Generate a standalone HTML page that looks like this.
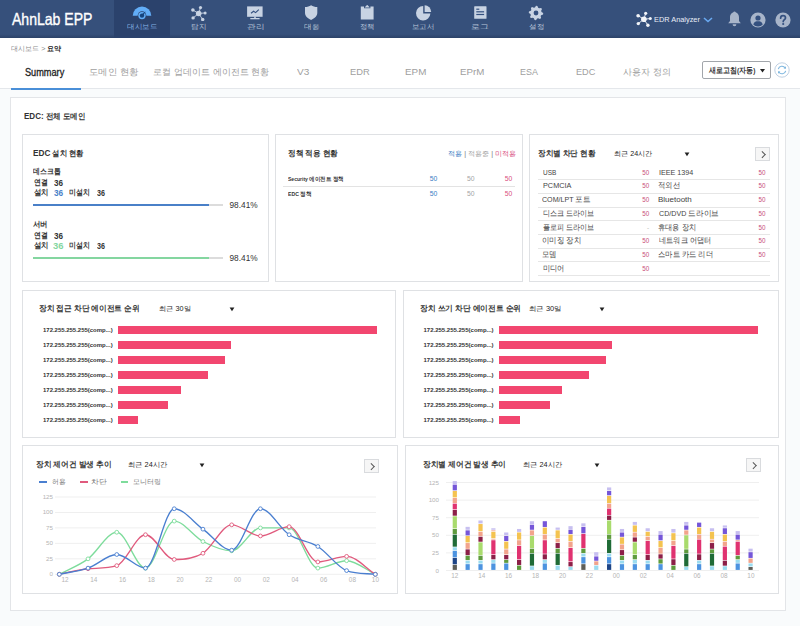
<!DOCTYPE html><html><head><meta charset="utf-8"><style>
*{box-sizing:border-box;margin:0;padding:0}
html,body{width:800px;height:626px;overflow:hidden;background:#f9fbfc;font-family:"Liberation Sans",sans-serif;color:#333}
.a{position:absolute;white-space:nowrap}
.t{position:absolute;white-space:nowrap;line-height:12px;height:12px}
#hdr{position:absolute;left:0;top:0;width:800px;height:38px;background:linear-gradient(#36507b 0,#36507b 90%,#2c4268 100%)}
.nav{position:absolute;top:0;width:56px;height:38px;text-align:center;color:#c3cfe0;font-size:7px}
.nav.on{background:#2b426c;color:#7fb0ea}
.nav svg{position:absolute;left:19px;top:5px}
.nav span{position:absolute;left:0;right:0;top:21.5px;line-height:9px}
#sub{position:absolute;left:0;top:38px;width:800px;height:51px;background:#fff;border-bottom:1px solid #e4e7eb}
#panel{position:absolute;left:10px;top:97px;width:776px;height:514px;background:#fff;border:1px solid #e3e5e8}
.card{position:absolute;background:#fff;border:1px solid #dfe1e4}
.b{font-weight:bold}
.btn{position:absolute;width:15px;height:14px;border:1px solid #d9dbde;background:#f6f6f6}
.btn:after{content:"";position:absolute;left:4px;top:4px;width:3.5px;height:3.5px;border-right:1.2px solid #555;border-top:1.2px solid #555;transform:rotate(45deg)}
</style></head><body>
<div id="hdr">
<div class="t" id="t1" style="left:12.00px;top:12.50px;font-size:16.5px;color:#fff;transform:scaleX(0.8511);transform-origin:0 50%;line-height:20px;height:20px;top:8.5px;-webkit-text-stroke:0.35px #fff;">AhnLab EPP</div>
<div class="nav on" style="left:114.0px"><svg width="20" height="16" viewBox="0 0 20 16" style="left:18px;top:0px;overflow:visible"><path d="M0.7 15.8 A9.3 9.3 0 0 1 19.3 15.8 Z" fill="#62adf7" transform="translate(0,0)"/><circle cx="10" cy="15.6" r="4.3" fill="#2b426c"/><circle cx="10" cy="15.6" r="3.7" fill="#62adf7"/><circle cx="10" cy="15.6" r="2.2" fill="#17457e"/><path d="M8.7 15.2 L13.6 11.2 L11 16.4Z" fill="#17457e"/></svg></div>
<div class="nav" style="left:170.3px"><svg width="18" height="16" viewBox="0 0 18 16"><g stroke="#c8d3e3" stroke-width="0.9"><line x1="9.7" y1="8.5" x2="3.90" y2="5.00"/><line x1="9.7" y1="8.5" x2="11.50" y2="2.60"/><line x1="9.7" y1="8.5" x2="16.10" y2="7.90"/><line x1="9.7" y1="8.5" x2="4.10" y2="12.90"/><line x1="9.7" y1="8.5" x2="13.70" y2="14.50"/></g><circle cx="9.7" cy="8.5" r="2.8" fill="#c8d3e3"/><circle cx="3.90" cy="5.00" r="1.8" fill="#c8d3e3"/><circle cx="11.50" cy="2.60" r="1.6" fill="#c8d3e3"/><circle cx="16.10" cy="7.90" r="1.5" fill="#c8d3e3"/><circle cx="4.10" cy="12.90" r="1.7" fill="#c8d3e3"/><circle cx="13.70" cy="14.50" r="1.7" fill="#c8d3e3"/></svg></div>
<div class="nav" style="left:226.6px"><svg width="18" height="16" viewBox="0 0 18 16"><rect x="1.1" y="1.4" width="15.5" height="10.4" fill="#c8d3e3"/><path d="M5 8.2 L7.6 6.2 L9.6 7.6 L12.8 4.6" stroke="#34507f" stroke-width="1.1" fill="none"/><rect x="8.2" y="11.5" width="1.6" height="1.8" fill="#c8d3e3"/><rect x="4.3" y="13" width="9.3" height="1.3" fill="#c8d3e3"/></svg></div>
<div class="nav" style="left:282.9px"><svg width="18" height="16" viewBox="0 0 18 16"><path d="M9.1 0.3 C10.9 1.4 12.8 2 15.3 2.1 L15.3 7.8 C15.3 11.2 12.8 13.3 9.1 14.9 C5.4 13.3 3 11.2 3 7.8 L3 2.1 C5.4 2 7.3 1.4 9.1 0.3Z" fill="#c8d3e3"/></svg></div>
<div class="nav" style="left:339.2px"><svg width="18" height="16" viewBox="0 0 18 16"><path d="M2.8 1.6 L6 1.6 L6 3.2 L12.4 3.2 L12.4 1.6 L15.6 1.6 L15.6 14.5 L2.8 14.5Z" fill="#c8d3e3"/><path d="M6.6 2.6 L9.2 -0.2 L11.8 2.6Z" fill="#c8d3e3"/></svg></div>
<div class="nav" style="left:395.5px"><svg width="18" height="16" viewBox="0 0 18 16"><path d="M8.2 1 A7.2 7.2 0 1 0 15.4 8.6 L8.2 8.6Z" fill="#c8d3e3"/><path d="M9.6 0.2 A6.8 6.8 0 0 1 16.2 7 L9.6 7Z" fill="#c8d3e3"/></svg></div>
<div class="nav" style="left:451.8px"><svg width="18" height="16" viewBox="0 0 18 16"><rect x="3.2" y="1.25" width="12.3" height="12.6" rx="0.6" fill="#c8d3e3"/><rect x="5.3" y="3.6" width="3" height="1.2" fill="#34507f"/><rect x="5.3" y="6.2" width="7.8" height="1.2" fill="#34507f"/><rect x="5.3" y="8.9" width="7.8" height="1.2" fill="#34507f"/></svg></div>
<div class="nav" style="left:508.1px"><svg width="18" height="16" viewBox="0 0 18 16"><polygon points="9.00,0.80 10.40,0.94 11.14,2.83 12.11,3.34 14.09,2.91 14.99,4.00 14.17,5.86 14.49,6.91 16.20,8.00 16.06,9.40 14.17,10.14 13.66,11.11 14.09,13.09 13.00,13.99 11.14,13.17 10.09,13.49 9.00,15.20 7.60,15.06 6.86,13.17 5.89,12.66 3.91,13.09 3.01,12.00 3.83,10.14 3.51,9.09 1.80,8.00 1.94,6.60 3.83,5.86 4.34,4.89 3.91,2.91 5.00,2.01 6.86,2.83 7.91,2.51" fill="#c8d3e3"/><circle cx="9" cy="8" r="2.4" fill="#34507f"/></svg></div>
<div class="t" id="t2" style="left:127.47px;top:20.80px;font-size:7px;color:#86b3e6;transform:scaleX(1.0747);transform-origin:0 50%;">대시보드</div>
<div class="t" id="t3" style="left:190.91px;top:20.80px;font-size:7px;color:#b9c6da;transform:scaleX(1.0780);transform-origin:0 50%;">탐지</div>
<div class="t" id="t4" style="left:246.77px;top:20.80px;font-size:7px;color:#b9c6da;transform:scaleX(1.2286);transform-origin:0 50%;">관리</div>
<div class="t" id="t5" style="left:304.00px;top:20.80px;font-size:7px;color:#b9c6da;transform:scaleX(1.0889);transform-origin:0 50%;">대응</div>
<div class="t" id="t6" style="left:359.88px;top:20.80px;font-size:7px;color:#b9c6da;transform:scaleX(1.0541);transform-origin:0 50%;">정책</div>
<div class="t" id="t7" style="left:411.88px;top:20.80px;font-size:7px;color:#b9c6da;transform:scaleX(1.0650);transform-origin:0 50%;">보고서</div>
<div class="t" id="t8" style="left:470.67px;top:20.80px;font-size:7px;color:#b9c6da;transform:scaleX(1.2564);transform-origin:0 50%;">로그</div>
<div class="t" id="t9" style="left:529.43px;top:20.80px;font-size:7px;color:#b9c6da;transform:scaleX(1.0741);transform-origin:0 50%;">설정</div>
<svg class="a" style="left:635px;top:11px" width="18" height="17" viewBox="0 0 18 17"><g stroke="#f2f4f8" stroke-width="0.9"><line x1="8.9" y1="8.2" x2="3.10" y2="4.70"/><line x1="8.9" y1="8.2" x2="10.70" y2="2.30"/><line x1="8.9" y1="8.2" x2="15.30" y2="7.60"/><line x1="8.9" y1="8.2" x2="3.30" y2="12.60"/><line x1="8.9" y1="8.2" x2="12.90" y2="14.20"/></g><circle cx="8.9" cy="8.2" r="2.8" fill="#f2f4f8"/><circle cx="3.10" cy="4.70" r="1.8" fill="#f2f4f8"/><circle cx="10.70" cy="2.30" r="1.6" fill="#f2f4f8"/><circle cx="15.30" cy="7.60" r="1.5" fill="#f2f4f8"/><circle cx="3.30" cy="12.60" r="1.7" fill="#f2f4f8"/><circle cx="12.90" cy="14.20" r="1.7" fill="#f2f4f8"/></svg>
<div class="t" id="t10" style="left:654.00px;top:13.50px;font-size:8px;color:#e8eef7;transform:scaleX(0.9220);transform-origin:0 50%;">EDR Analyzer</div>
<svg class="a" style="left:703px;top:16.5px" width="10" height="6" viewBox="0 0 10 6"><path d="M1 1 L5 4.5 L9 1" stroke="#6aaaf2" stroke-width="1.6" fill="none"/></svg>
<svg class="a" style="left:727px;top:11px" width="15" height="16" viewBox="0 0 15 16"><path d="M7.5 1.2 C4.3 1.2 3 3.8 3 6.5 L3 10 L1.2 12.3 L13.8 12.3 L12 10 L12 6.5 C12 3.8 10.7 1.2 7.5 1.2Z" fill="#a8b5ca"/><circle cx="7.5" cy="1.6" r="1.1" fill="#a8b5ca"/><path d="M5.6 13.3 a1.9 1.9 0 0 0 3.8 0Z" fill="#a8b5ca"/></svg>
<svg class="a" style="left:750px;top:11.5px" width="16" height="16" viewBox="0 0 16 16"><circle cx="8" cy="8" r="7.6" fill="#a8b5ca"/><circle cx="8" cy="6" r="2.6" fill="#34507f"/><path d="M3.3 12.5 C4 9.8 6 9.3 8 9.3 C10 9.3 12 9.8 12.7 12.5 C11.5 13.8 10 14.5 8 14.5 C6 14.5 4.5 13.8 3.3 12.5Z" fill="#34507f"/></svg>
<svg class="a" style="left:774.5px;top:11.5px" width="16" height="16" viewBox="0 0 16 16"><circle cx="8" cy="8" r="7.6" fill="#a8b5ca"/><path d="M5.6 6.2 C5.6 4.6 6.7 3.7 8 3.7 C9.4 3.7 10.5 4.6 10.5 5.9 C10.5 7.6 8.2 7.8 8.2 9.6" stroke="#34507f" stroke-width="1.7" fill="none" stroke-linecap="round"/><circle cx="8.2" cy="12" r="1.1" fill="#34507f"/></svg>
</div>
<div id="sub"></div>
<div class="t" id="t11" style="left:11.02px;top:43.00px;font-size:7.2px;color:#8a8a8a;transform:scaleX(1.0045);transform-origin:0 50%;">대시보드 &gt; <b style="color:#222">요약</b></div>
<div class="t" id="t12" style="left:25.47px;top:67.20px;font-size:10px;color:#222;transform:scaleX(0.9169);transform-origin:0 50%;-webkit-text-stroke:0.3px #222;">Summary</div>
<div class="t" id="t13" style="left:88.91px;top:66.40px;font-size:9.3px;color:#a0a0a0;transform:scaleX(1.0444);transform-origin:0 50%;">도메인 현황</div>
<div class="t" id="t14" style="left:153.49px;top:66.40px;font-size:9.3px;color:#a0a0a0;">로컬 업데이트 에이전트 현황</div>
<div class="t" id="t15" style="left:297.46px;top:66.40px;font-size:9.8px;color:#a0a0a0;transform:scaleX(1.0261);transform-origin:0 50%;">V3</div>
<div class="t" id="t16" style="left:350.05px;top:66.40px;font-size:9.8px;color:#a0a0a0;transform:scaleX(0.9528);transform-origin:0 50%;">EDR</div>
<div class="t" id="t17" style="left:404.94px;top:66.40px;font-size:9.8px;color:#a0a0a0;transform:scaleX(1.0046);transform-origin:0 50%;">EPM</div>
<div class="t" id="t18" style="left:460.47px;top:66.40px;font-size:9.8px;color:#a0a0a0;transform:scaleX(0.9934);transform-origin:0 50%;">EPrM</div>
<div class="t" id="t19" style="left:520.09px;top:66.40px;font-size:9.8px;color:#a0a0a0;transform:scaleX(0.9129);transform-origin:0 50%;">ESA</div>
<div class="t" id="t20" style="left:575.54px;top:66.40px;font-size:9.8px;color:#a0a0a0;transform:scaleX(0.9336);transform-origin:0 50%;">EDC</div>
<div class="t" id="t21" style="left:623.47px;top:66.40px;font-size:9.3px;color:#a0a0a0;">사용자 정의</div>
<div class="a" style="left:11px;top:87.5px;width:70px;height:2px;background:#4a8fd8"></div>
<div class="a" style="left:702.4px;top:60.8px;width:68.5px;height:18.4px;border:1px solid #a2a6ab;border-radius:2px;background:#fff"></div>
<div class="t" id="t22" style="left:709.06px;top:65.00px;font-size:7.5px;color:#333;font-weight:bold;transform:scaleX(0.8751);transform-origin:0 50%;">새로고침(자동)</div>
<svg class="a" style="left:760px;top:69px" width="5" height="4" viewBox="0 0 5 4"><path d="M0 0 H5 L2.5 3.5Z" fill="#222"/></svg>
<svg class="a" style="left:774px;top:62px" width="16" height="16" viewBox="0 0 16 16"><circle cx="8" cy="8" r="7.2" fill="#fff" stroke="#bfd0e2" stroke-width="1"/><path d="M4.3 7.2 A3.8 3.8 0 0 1 11.2 6" stroke="#7db6df" stroke-width="1.1" fill="none"/><path d="M11.7 8.8 A3.8 3.8 0 0 1 4.8 10" stroke="#7db6df" stroke-width="1.1" fill="none"/><path d="M12 4.2 L12 6.8 L9.6 6.6Z" fill="#7db6df"/><path d="M4 11.8 L4 9.2 L6.4 9.4Z" fill="#7db6df"/></svg>
<div id="panel"></div>
<div class="t" id="t23" style="left:24.00px;top:109.90px;font-size:7.6px;color:#333;font-weight:bold;transform:scaleX(0.9373);transform-origin:0 50%;"><span style="font-size:8.6px">EDC:</span> 전체 도메인</div>
<div class="card" style="left:22px;top:134px;width:247px;height:148px"></div>
<div class="card" style="left:275px;top:134px;width:248px;height:148px"></div>
<div class="card" style="left:529px;top:134px;width:250px;height:148px"></div>
<div class="card" style="left:22px;top:289.5px;width:374px;height:148px"></div>
<div class="card" style="left:403px;top:289.5px;width:376px;height:148px"></div>
<div class="card" style="left:22px;top:445px;width:376px;height:149px"></div>
<div class="card" style="left:405px;top:445px;width:374px;height:149px"></div>
<div class="t" id="t24" style="left:33.46px;top:147.10px;font-size:7.6px;color:#333;font-weight:bold;transform:scaleX(0.9152);transform-origin:0 50%;"><span style="font-size:9px">EDC</span> 설치 현황</div>
<div class="t" id="t25" style="left:32.98px;top:166.00px;font-size:7.5px;color:#333;font-weight:bold;transform:scaleX(0.8563);transform-origin:0 50%;">데스크톱</div>
<div class="t" id="t26" style="left:33.56px;top:176.50px;font-size:7.5px;color:#333;font-weight:bold;transform:scaleX(0.8608);transform-origin:0 50%;">연결</div>
<div class="t" id="t27" style="left:54.00px;top:176.50px;font-size:8.8px;color:#333;font-weight:bold;transform:scaleX(0.9240);transform-origin:0 50%;">36</div>
<div class="t" id="t28" style="left:33.55px;top:186.50px;font-size:7.5px;color:#333;font-weight:bold;transform:scaleX(0.9270);transform-origin:0 50%;">설치</div>
<div class="t" id="t29" style="left:53.93px;top:186.50px;font-size:8.8px;color:#4a80c8;font-weight:bold;transform:scaleX(0.9355);transform-origin:0 50%;">36</div>
<div class="t" id="t30" style="left:69.00px;top:186.50px;font-size:7.5px;color:#333;font-weight:bold;transform:scaleX(0.8696);transform-origin:0 50%;">미설치</div>
<div class="t" id="t31" style="left:96.52px;top:186.50px;font-size:8.8px;color:#333;font-weight:bold;transform:scaleX(0.8095);transform-origin:0 50%;">36</div>
<div class="a" style="left:33px;top:204.0px;width:190px;height:2.4px;background:#dcdcdc"></div>
<div class="a" style="left:33px;top:204.0px;width:175.5px;height:2.4px;background:#4a80c8"></div>
<div class="t" id="t32" style="left:229.50px;top:199.00px;font-size:8.3px;color:#333;">98.41%</div>
<div class="t" id="t33" style="left:33.00px;top:219.20px;font-size:7.5px;color:#333;font-weight:bold;transform:scaleX(0.9270);transform-origin:0 50%;">서버</div>
<div class="t" id="t34" style="left:33.56px;top:229.70px;font-size:7.5px;color:#333;font-weight:bold;transform:scaleX(0.8608);transform-origin:0 50%;">연결</div>
<div class="t" id="t35" style="left:54.00px;top:229.70px;font-size:8.8px;color:#333;font-weight:bold;transform:scaleX(0.9240);transform-origin:0 50%;">36</div>
<div class="t" id="t36" style="left:33.55px;top:239.70px;font-size:7.5px;color:#333;font-weight:bold;transform:scaleX(0.9270);transform-origin:0 50%;">설치</div>
<div class="t" id="t37" style="left:52.93px;top:239.70px;font-size:8.8px;color:#84d6a0;font-weight:bold;transform:scaleX(1.0692);transform-origin:0 50%;">36</div>
<div class="t" id="t38" style="left:69.00px;top:239.70px;font-size:7.5px;color:#333;font-weight:bold;transform:scaleX(0.8696);transform-origin:0 50%;">미설치</div>
<div class="t" id="t39" style="left:96.52px;top:239.70px;font-size:8.8px;color:#333;font-weight:bold;transform:scaleX(0.8095);transform-origin:0 50%;">36</div>
<div class="a" style="left:33px;top:257.1px;width:190px;height:2.4px;background:#dcdcdc"></div>
<div class="a" style="left:33px;top:257.1px;width:175.5px;height:2.4px;background:#84d6a0"></div>
<div class="t" id="t40" style="left:229.50px;top:252.10px;font-size:8.3px;color:#333;">98.41%</div>
<div class="t" id="t41" style="left:287.51px;top:148.20px;font-size:7.6px;color:#333;font-weight:bold;transform:scaleX(0.9540);transform-origin:0 50%;">정책 적용 현황</div>
<div class="t" id="t42" style="left:447.98px;top:148.20px;font-size:7px;color:#999;transform:scaleX(1.0154);transform-origin:0 50%;"><span style="color:#3b7dc4">적용</span> <span style="color:#777">|</span> <span style="color:#a5a5a5">적용중</span> <span style="color:#777">|</span> <span style="color:#d9507f">미적용</span></div>
<div class="t" id="t43" style="left:288.00px;top:173.30px;font-size:5.5px;color:#333;font-weight:bold;transform:scaleX(0.9183);transform-origin:0 50%;">Security 에이전트 정책</div>
<div class="t" id="t44" style="left:429.80px;top:173.30px;font-size:6.8px;color:#3b7dc4;">50</div>
<div class="t" id="t45" style="left:467.00px;top:173.30px;font-size:6.8px;color:#a5a5a5;">50</div>
<div class="t" id="t46" style="left:504.80px;top:173.30px;font-size:6.8px;color:#d9507f;">50</div>
<div class="t" id="t47" style="left:288.00px;top:187.50px;font-size:5.5px;color:#333;font-weight:bold;transform:scaleX(0.9369);transform-origin:0 50%;">EDC 정책</div>
<div class="t" id="t48" style="left:429.80px;top:187.50px;font-size:6.8px;color:#3b7dc4;">50</div>
<div class="t" id="t49" style="left:467.00px;top:187.50px;font-size:6.8px;color:#a5a5a5;">50</div>
<div class="t" id="t50" style="left:504.80px;top:187.50px;font-size:6.8px;color:#d9507f;">50</div>
<div class="a" style="left:283px;top:185.5px;width:232px;height:1px;background:#e3e3e3"></div>
<div class="t" id="t51" style="left:538.00px;top:148.20px;font-size:7.6px;color:#333;font-weight:bold;transform:scaleX(0.9505);transform-origin:0 50%;">장치별 차단 현황</div>
<div class="t" id="t52" style="left:613.98px;top:148.20px;font-size:7px;color:#222;transform:scaleX(1.0173);transform-origin:0 50%;">최근 24시간</div>
<svg class="a" style="left:683.5px;top:152.2px" width="6" height="5" viewBox="0 0 6 5"><path d="M0.6 0.5 H5.4 L3 4.2Z" fill="#222"/></svg>
<div class="btn" style="left:755px;top:146.5px"></div>
<div class="t" id="t53" style="left:542.64px;top:166.70px;font-size:7.5px;color:#444;transform:scaleX(0.8608);transform-origin:0 50%;">USB</div>
<div class="t" id="t54" style="right:150.79999999999995px;top:166.70px;font-size:6.3px;color:#c9507a;">50</div>
<div class="t" id="t55" style="left:658.53px;top:166.70px;font-size:7.5px;color:#444;transform:scaleX(0.9560);transform-origin:0 50%;">IEEE 1394</div>
<div class="t" id="t56" style="right:34.5px;top:166.70px;font-size:6.3px;color:#c9507a;">50</div>
<div class="a" style="left:538px;top:179.2px;width:232px;height:1px;background:#e6e6e6"></div>
<div class="t" id="t57" style="left:542.50px;top:180.40px;font-size:7.5px;color:#444;transform:scaleX(0.9736);transform-origin:0 50%;">PCMCIA</div>
<div class="t" id="t58" style="right:150.79999999999995px;top:180.40px;font-size:6.3px;color:#c9507a;">50</div>
<div class="t" id="t59" style="left:657.61px;top:180.40px;font-size:7.5px;color:#444;transform:scaleX(0.9204);transform-origin:0 50%;">적외선</div>
<div class="t" id="t60" style="right:34.5px;top:180.40px;font-size:6.3px;color:#c9507a;">50</div>
<div class="a" style="left:538px;top:192.9px;width:232px;height:1px;background:#e6e6e6"></div>
<div class="t" id="t61" style="left:542.46px;top:194.10px;font-size:7.5px;color:#444;transform:scaleX(0.9457);transform-origin:0 50%;">COM/LPT 포트</div>
<div class="t" id="t62" style="right:150.79999999999995px;top:194.10px;font-size:6.3px;color:#c9507a;">50</div>
<div class="t" id="t63" style="left:658.42px;top:194.10px;font-size:7.5px;color:#444;transform:scaleX(1.0662);transform-origin:0 50%;">Bluetooth</div>
<div class="t" id="t64" style="right:34.5px;top:194.10px;font-size:6.3px;color:#c9507a;">50</div>
<div class="a" style="left:538px;top:206.6px;width:232px;height:1px;background:#e6e6e6"></div>
<div class="t" id="t65" style="left:542.57px;top:207.80px;font-size:7.5px;color:#444;transform:scaleX(0.8837);transform-origin:0 50%;">디스크 드라이브</div>
<div class="t" id="t66" style="right:150.79999999999995px;top:207.80px;font-size:6.3px;color:#c9507a;">50</div>
<div class="t" id="t67" style="left:658.52px;top:207.80px;font-size:7.5px;color:#444;transform:scaleX(0.9511);transform-origin:0 50%;">CD/DVD 드라이브</div>
<div class="t" id="t68" style="right:34.5px;top:207.80px;font-size:6.3px;color:#c9507a;">50</div>
<div class="a" style="left:538px;top:220.3px;width:232px;height:1px;background:#e6e6e6"></div>
<div class="t" id="t69" style="left:542.57px;top:221.50px;font-size:7.5px;color:#444;transform:scaleX(0.8837);transform-origin:0 50%;">플로피 드라이브</div>
<div class="t" id="t70" style="right:150.79999999999995px;top:221.50px;font-size:6.3px;color:#bbb;">-</div>
<div class="t" id="t71" style="left:657.66px;top:221.50px;font-size:7.5px;color:#444;transform:scaleX(0.9033);transform-origin:0 50%;">휴대용 장치</div>
<div class="t" id="t72" style="right:34.5px;top:221.50px;font-size:6.3px;color:#c9507a;">50</div>
<div class="a" style="left:538px;top:234.0px;width:232px;height:1px;background:#e6e6e6"></div>
<div class="t" id="t73" style="left:541.58px;top:235.20px;font-size:7.5px;color:#444;transform:scaleX(0.9275);transform-origin:0 50%;">이미징 장치</div>
<div class="t" id="t74" style="right:150.79999999999995px;top:235.20px;font-size:6.3px;color:#c9507a;">50</div>
<div class="t" id="t75" style="left:658.55px;top:235.20px;font-size:7.5px;color:#444;transform:scaleX(0.8987);transform-origin:0 50%;">네트워크 어댑터</div>
<div class="t" id="t76" style="right:34.5px;top:235.20px;font-size:6.3px;color:#c9507a;">50</div>
<div class="a" style="left:538px;top:247.7px;width:232px;height:1px;background:#e6e6e6"></div>
<div class="t" id="t77" style="left:541.60px;top:248.90px;font-size:7.5px;color:#444;transform:scaleX(0.9223);transform-origin:0 50%;">모뎀</div>
<div class="t" id="t78" style="right:150.79999999999995px;top:248.90px;font-size:6.3px;color:#c9507a;">50</div>
<div class="t" id="t79" style="left:657.65px;top:248.90px;font-size:7.5px;color:#444;transform:scaleX(0.9144);transform-origin:0 50%;">스마트 카드 리더</div>
<div class="t" id="t80" style="right:34.5px;top:248.90px;font-size:6.3px;color:#c9507a;">50</div>
<div class="a" style="left:538px;top:261.4px;width:232px;height:1px;background:#e6e6e6"></div>
<div class="t" id="t81" style="left:542.59px;top:262.60px;font-size:7.5px;color:#444;transform:scaleX(0.9034);transform-origin:0 50%;">미디어</div>
<div class="t" id="t82" style="right:150.79999999999995px;top:262.60px;font-size:6.3px;color:#c9507a;">50</div>
<div class="a" style="left:538px;top:275.1px;width:232px;height:1px;background:#e6e6e6"></div>
<div class="t" id="t83" style="left:38.98px;top:303.00px;font-size:7.6px;color:#333;font-weight:bold;transform:scaleX(0.9636);transform-origin:0 50%;">장치 접근 차단 에이전트 순위</div>
<div class="t" id="t84" style="left:158.50px;top:303.00px;font-size:7px;color:#222;transform:scaleX(1.0338);transform-origin:0 50%;">최근 30일</div>
<svg class="a" style="left:229px;top:307.2px" width="6" height="5" viewBox="0 0 6 5"><path d="M0.6 0.5 H5.4 L3 4.2Z" fill="#222"/></svg>
<div class="t" id="t85" style="left:42.50px;top:324.30px;font-size:6px;color:#333;font-weight:bold;transform:scaleX(0.9946);transform-origin:0 50%;">172.255.255.255(comp...)</div>
<div class="a" style="left:118px;top:326.3px;width:258.5px;height:8.2px;background:#f2466f"></div>
<div class="t" id="t86" style="left:42.50px;top:339.30px;font-size:6px;color:#333;font-weight:bold;transform:scaleX(0.9946);transform-origin:0 50%;">172.255.255.255(comp...)</div>
<div class="a" style="left:118px;top:341.3px;width:112.5px;height:8.2px;background:#f2466f"></div>
<div class="t" id="t87" style="left:42.50px;top:354.30px;font-size:6px;color:#333;font-weight:bold;transform:scaleX(0.9946);transform-origin:0 50%;">172.255.255.255(comp...)</div>
<div class="a" style="left:118px;top:356.3px;width:106.5px;height:8.2px;background:#f2466f"></div>
<div class="t" id="t88" style="left:42.50px;top:369.30px;font-size:6px;color:#333;font-weight:bold;transform:scaleX(0.9946);transform-origin:0 50%;">172.255.255.255(comp...)</div>
<div class="a" style="left:118px;top:371.3px;width:89.5px;height:8.2px;background:#f2466f"></div>
<div class="t" id="t89" style="left:42.50px;top:384.30px;font-size:6px;color:#333;font-weight:bold;transform:scaleX(0.9946);transform-origin:0 50%;">172.255.255.255(comp...)</div>
<div class="a" style="left:118px;top:386.3px;width:62.5px;height:8.2px;background:#f2466f"></div>
<div class="t" id="t90" style="left:42.50px;top:399.30px;font-size:6px;color:#333;font-weight:bold;transform:scaleX(0.9946);transform-origin:0 50%;">172.255.255.255(comp...)</div>
<div class="a" style="left:118px;top:401.3px;width:50.0px;height:8.2px;background:#f2466f"></div>
<div class="t" id="t91" style="left:42.50px;top:414.30px;font-size:6px;color:#333;font-weight:bold;transform:scaleX(0.9946);transform-origin:0 50%;">172.255.255.255(comp...)</div>
<div class="a" style="left:118px;top:416.3px;width:20.0px;height:8.2px;background:#f2466f"></div>
<div class="t" id="t92" style="left:420.00px;top:303.00px;font-size:7.6px;color:#333;font-weight:bold;transform:scaleX(0.9691);transform-origin:0 50%;">장치 쓰기 차단 에이전트 순위</div>
<div class="t" id="t93" style="left:528.95px;top:303.00px;font-size:7px;color:#222;transform:scaleX(1.0624);transform-origin:0 50%;">최근 30일</div>
<svg class="a" style="left:599px;top:307.2px" width="6" height="5" viewBox="0 0 6 5"><path d="M0.6 0.5 H5.4 L3 4.2Z" fill="#222"/></svg>
<div class="t" id="t94" style="left:423.50px;top:324.30px;font-size:6px;color:#333;font-weight:bold;">172.255.255.255(comp...)</div>
<div class="a" style="left:499px;top:326.3px;width:259.0px;height:8.2px;background:#f2466f"></div>
<div class="t" id="t95" style="left:423.50px;top:339.30px;font-size:6px;color:#333;font-weight:bold;">172.255.255.255(comp...)</div>
<div class="a" style="left:499px;top:341.3px;width:113.0px;height:8.2px;background:#f2466f"></div>
<div class="t" id="t96" style="left:423.50px;top:354.30px;font-size:6px;color:#333;font-weight:bold;">172.255.255.255(comp...)</div>
<div class="a" style="left:499px;top:356.3px;width:106.5px;height:8.2px;background:#f2466f"></div>
<div class="t" id="t97" style="left:423.50px;top:369.30px;font-size:6px;color:#333;font-weight:bold;">172.255.255.255(comp...)</div>
<div class="a" style="left:499px;top:371.3px;width:90.0px;height:8.2px;background:#f2466f"></div>
<div class="t" id="t98" style="left:423.50px;top:384.30px;font-size:6px;color:#333;font-weight:bold;">172.255.255.255(comp...)</div>
<div class="a" style="left:499px;top:386.3px;width:63.0px;height:8.2px;background:#f2466f"></div>
<div class="t" id="t99" style="left:423.50px;top:399.30px;font-size:6px;color:#333;font-weight:bold;">172.255.255.255(comp...)</div>
<div class="a" style="left:499px;top:401.3px;width:50.5px;height:8.2px;background:#f2466f"></div>
<div class="t" id="t100" style="left:423.50px;top:414.30px;font-size:6px;color:#333;font-weight:bold;">172.255.255.255(comp...)</div>
<div class="a" style="left:499px;top:416.3px;width:20.5px;height:8.2px;background:#f2466f"></div>
<div class="t" id="t101" style="left:36.01px;top:459.00px;font-size:7.6px;color:#333;font-weight:bold;transform:scaleX(0.9612);transform-origin:0 50%;">장치 제어건 발생 추이</div>
<div class="t" id="t102" style="left:128.42px;top:459.00px;font-size:7px;color:#222;transform:scaleX(1.0397);transform-origin:0 50%;">최근 24시간</div>
<svg class="a" style="left:198.5px;top:463.2px" width="6" height="5" viewBox="0 0 6 5"><path d="M0.6 0.5 H5.4 L3 4.2Z" fill="#222"/></svg>
<div class="btn" style="left:364px;top:459px"></div>
<div class="t" id="t103" style="left:422.50px;top:459.00px;font-size:7.6px;color:#333;font-weight:bold;transform:scaleX(0.9626);transform-origin:0 50%;">장치별 제어건 발생 추이</div>
<div class="t" id="t104" style="left:523.45px;top:459.00px;font-size:7px;color:#222;transform:scaleX(1.0341);transform-origin:0 50%;">최근 24시간</div>
<svg class="a" style="left:593.5px;top:463.2px" width="6" height="5" viewBox="0 0 6 5"><path d="M0.6 0.5 H5.4 L3 4.2Z" fill="#222"/></svg>
<div class="btn" style="left:745.5px;top:458px"></div>
<div class="a" style="left:39.2px;top:481.3px;width:7.8px;height:1.6px;background:#4a7fd0"></div>
<div class="t" id="t105" style="left:51.57px;top:476.00px;font-size:6.8px;color:#777;transform:scaleX(0.9749);transform-origin:0 50%;">허용</div>
<div class="a" style="left:79.9px;top:481.3px;width:7.8px;height:1.6px;background:#e05a7d"></div>
<div class="t" id="t106" style="left:91.34px;top:476.00px;font-size:6.8px;color:#777;transform:scaleX(1.1196);transform-origin:0 50%;">차단</div>
<div class="a" style="left:120.5px;top:481.3px;width:7.8px;height:1.6px;background:#7edc9c"></div>
<div class="t" id="t107" style="left:132.50px;top:476.00px;font-size:6.8px;color:#777;transform:scaleX(0.9941);transform-origin:0 50%;">모니터링</div>
<svg class="a" style="left:0;top:0" width="800" height="626" viewBox="0 0 800 626"><line x1="55" y1="574.30" x2="376" y2="574.30" stroke="#efefef" stroke-width="1"/><line x1="55" y1="558.84" x2="376" y2="558.84" stroke="#efefef" stroke-width="1"/><line x1="55" y1="543.38" x2="376" y2="543.38" stroke="#efefef" stroke-width="1"/><line x1="55" y1="527.92" x2="376" y2="527.92" stroke="#efefef" stroke-width="1"/><line x1="55" y1="512.46" x2="376" y2="512.46" stroke="#efefef" stroke-width="1"/><line x1="55" y1="497.00" x2="376" y2="497.00" stroke="#efefef" stroke-width="1"/><path d="M59.30 574.30 C68.88 569.15 78.45 565.85 88.03 558.84 C97.61 551.83 107.18 532.25 116.76 532.25 C126.34 532.25 135.91 568.12 145.49 568.12 C155.07 568.12 164.64 521.12 174.22 521.12 C183.80 521.12 193.37 536.58 202.95 541.52 C212.53 546.47 222.10 550.80 231.68 550.80 C241.26 550.80 250.83 527.92 260.41 527.92 C269.99 527.92 279.56 527.92 289.14 527.92 C298.72 527.92 308.29 568.12 317.87 568.12 C327.45 568.12 337.02 560.70 346.60 560.70 C356.18 560.70 365.75 569.77 375.33 574.30" stroke="#7edc9c" stroke-width="1.35" fill="none"/><circle cx="59.30" cy="574.30" r="1.9" fill="#fff" stroke="#7edc9c" stroke-width="0.9"/><circle cx="88.03" cy="558.84" r="1.9" fill="#fff" stroke="#7edc9c" stroke-width="0.9"/><circle cx="116.76" cy="532.25" r="1.9" fill="#fff" stroke="#7edc9c" stroke-width="0.9"/><circle cx="145.49" cy="568.12" r="1.9" fill="#fff" stroke="#7edc9c" stroke-width="0.9"/><circle cx="174.22" cy="521.12" r="1.9" fill="#fff" stroke="#7edc9c" stroke-width="0.9"/><circle cx="202.95" cy="541.52" r="1.9" fill="#fff" stroke="#7edc9c" stroke-width="0.9"/><circle cx="231.68" cy="550.80" r="1.9" fill="#fff" stroke="#7edc9c" stroke-width="0.9"/><circle cx="260.41" cy="527.92" r="1.9" fill="#fff" stroke="#7edc9c" stroke-width="0.9"/><circle cx="289.14" cy="527.92" r="1.9" fill="#fff" stroke="#7edc9c" stroke-width="0.9"/><circle cx="317.87" cy="568.12" r="1.9" fill="#fff" stroke="#7edc9c" stroke-width="0.9"/><circle cx="346.60" cy="560.70" r="1.9" fill="#fff" stroke="#7edc9c" stroke-width="0.9"/><circle cx="375.33" cy="574.30" r="1.9" fill="#fff" stroke="#7edc9c" stroke-width="0.9"/><path d="M59.30 574.30 C68.88 572.44 78.45 569.50 88.03 568.73 C97.61 567.97 107.18 568.64 116.76 565.64 C126.34 562.65 135.91 534.72 145.49 534.72 C155.07 534.72 164.64 559.46 174.22 559.46 C183.80 559.46 193.37 559.05 202.95 553.27 C212.53 547.50 222.10 524.83 231.68 524.83 C241.26 524.83 250.83 535.96 260.41 535.96 C269.99 535.96 279.56 526.68 289.14 526.68 C298.72 526.68 308.29 561.93 317.87 561.93 C327.45 561.93 337.02 556.37 346.60 556.37 C356.18 556.37 365.75 568.32 375.33 574.30" stroke="#e05a7d" stroke-width="1.35" fill="none"/><circle cx="59.30" cy="574.30" r="1.9" fill="#fff" stroke="#e05a7d" stroke-width="0.9"/><circle cx="88.03" cy="568.73" r="1.9" fill="#fff" stroke="#e05a7d" stroke-width="0.9"/><circle cx="116.76" cy="565.64" r="1.9" fill="#fff" stroke="#e05a7d" stroke-width="0.9"/><circle cx="145.49" cy="534.72" r="1.9" fill="#fff" stroke="#e05a7d" stroke-width="0.9"/><circle cx="174.22" cy="559.46" r="1.9" fill="#fff" stroke="#e05a7d" stroke-width="0.9"/><circle cx="202.95" cy="553.27" r="1.9" fill="#fff" stroke="#e05a7d" stroke-width="0.9"/><circle cx="231.68" cy="524.83" r="1.9" fill="#fff" stroke="#e05a7d" stroke-width="0.9"/><circle cx="260.41" cy="535.96" r="1.9" fill="#fff" stroke="#e05a7d" stroke-width="0.9"/><circle cx="289.14" cy="526.68" r="1.9" fill="#fff" stroke="#e05a7d" stroke-width="0.9"/><circle cx="317.87" cy="561.93" r="1.9" fill="#fff" stroke="#e05a7d" stroke-width="0.9"/><circle cx="346.60" cy="556.37" r="1.9" fill="#fff" stroke="#e05a7d" stroke-width="0.9"/><circle cx="375.33" cy="574.30" r="1.9" fill="#fff" stroke="#e05a7d" stroke-width="0.9"/><path d="M59.30 574.30 C68.88 572.24 78.45 571.41 88.03 568.12 C97.61 564.82 107.18 554.51 116.76 554.51 C126.34 554.51 135.91 568.12 145.49 568.12 C155.07 568.12 164.64 508.75 174.22 508.75 C183.80 508.75 193.37 522.25 202.95 529.16 C212.53 536.06 222.10 550.18 231.68 550.18 C241.26 550.18 250.83 508.75 260.41 508.75 C269.99 508.75 279.56 528.44 289.14 534.72 C298.72 541.01 308.29 540.49 317.87 546.47 C327.45 552.45 337.02 567.00 346.60 570.59 C356.18 574.17 365.75 573.34 375.33 574.30" stroke="#4a7fd0" stroke-width="1.35" fill="none"/><circle cx="59.30" cy="574.30" r="1.9" fill="#fff" stroke="#4a7fd0" stroke-width="0.9"/><circle cx="88.03" cy="568.12" r="1.9" fill="#fff" stroke="#4a7fd0" stroke-width="0.9"/><circle cx="116.76" cy="554.51" r="1.9" fill="#fff" stroke="#4a7fd0" stroke-width="0.9"/><circle cx="145.49" cy="568.12" r="1.9" fill="#fff" stroke="#4a7fd0" stroke-width="0.9"/><circle cx="174.22" cy="508.75" r="1.9" fill="#fff" stroke="#4a7fd0" stroke-width="0.9"/><circle cx="202.95" cy="529.16" r="1.9" fill="#fff" stroke="#4a7fd0" stroke-width="0.9"/><circle cx="231.68" cy="550.18" r="1.9" fill="#fff" stroke="#4a7fd0" stroke-width="0.9"/><circle cx="260.41" cy="508.75" r="1.9" fill="#fff" stroke="#4a7fd0" stroke-width="0.9"/><circle cx="289.14" cy="534.72" r="1.9" fill="#fff" stroke="#4a7fd0" stroke-width="0.9"/><circle cx="317.87" cy="546.47" r="1.9" fill="#fff" stroke="#4a7fd0" stroke-width="0.9"/><circle cx="346.60" cy="570.59" r="1.9" fill="#fff" stroke="#4a7fd0" stroke-width="0.9"/><circle cx="375.33" cy="574.30" r="1.9" fill="#fff" stroke="#4a7fd0" stroke-width="0.9"/></svg>
<div class="t" id="t108" style="right:747px;top:568.30px;font-size:6.2px;color:#b5b5b5;">0</div>
<div class="t" id="t109" style="right:747px;top:552.84px;font-size:6.2px;color:#b5b5b5;">25</div>
<div class="t" id="t110" style="right:747px;top:537.38px;font-size:6.2px;color:#b5b5b5;">50</div>
<div class="t" id="t111" style="right:747px;top:521.92px;font-size:6.2px;color:#b5b5b5;">75</div>
<div class="t" id="t112" style="right:747px;top:506.46px;font-size:6.2px;color:#b5b5b5;">100</div>
<div class="t" id="t113" style="right:747px;top:491.00px;font-size:6.2px;color:#b5b5b5;">125</div>
<div class="t" style="left:55.10px;width:20px;text-align:center;top:573.60px;font-size:6.4px;color:#b5b5b5">12</div>
<div class="t" style="left:83.83px;width:20px;text-align:center;top:573.60px;font-size:6.4px;color:#b5b5b5">14</div>
<div class="t" style="left:112.56px;width:20px;text-align:center;top:573.60px;font-size:6.4px;color:#b5b5b5">16</div>
<div class="t" style="left:141.29px;width:20px;text-align:center;top:573.60px;font-size:6.4px;color:#b5b5b5">18</div>
<div class="t" style="left:170.02px;width:20px;text-align:center;top:573.60px;font-size:6.4px;color:#b5b5b5">20</div>
<div class="t" style="left:198.75px;width:20px;text-align:center;top:573.60px;font-size:6.4px;color:#b5b5b5">22</div>
<div class="t" style="left:227.48px;width:20px;text-align:center;top:573.60px;font-size:6.4px;color:#b5b5b5">00</div>
<div class="t" style="left:256.21px;width:20px;text-align:center;top:573.60px;font-size:6.4px;color:#b5b5b5">02</div>
<div class="t" style="left:284.94px;width:20px;text-align:center;top:573.60px;font-size:6.4px;color:#b5b5b5">04</div>
<div class="t" style="left:313.67px;width:20px;text-align:center;top:573.60px;font-size:6.4px;color:#b5b5b5">06</div>
<div class="t" style="left:342.40px;width:20px;text-align:center;top:573.60px;font-size:6.4px;color:#b5b5b5">08</div>
<div class="t" style="left:365.40px;width:20px;text-align:center;top:573.60px;font-size:6.4px;color:#b5b5b5">10</div>
<svg class="a" style="left:0;top:0" width="800" height="626" viewBox="0 0 800 626"><line x1="446" y1="570.50" x2="759" y2="570.50" stroke="#efefef" stroke-width="1"/><line x1="446" y1="552.90" x2="759" y2="552.90" stroke="#efefef" stroke-width="1"/><line x1="446" y1="535.30" x2="759" y2="535.30" stroke="#efefef" stroke-width="1"/><line x1="446" y1="517.70" x2="759" y2="517.70" stroke="#efefef" stroke-width="1"/><line x1="446" y1="500.10" x2="759" y2="500.10" stroke="#efefef" stroke-width="1"/><line x1="446" y1="482.50" x2="759" y2="482.50" stroke="#efefef" stroke-width="1"/><rect x="452.70" y="564.87" width="4.2" height="5.03" fill="#5e5e58"/><rect x="452.70" y="557.83" width="4.2" height="6.44" fill="#1d4486"/><rect x="452.70" y="550.79" width="4.2" height="6.44" fill="#4c93e0"/><rect x="452.70" y="547.27" width="4.2" height="2.92" fill="#9bdcf0"/><rect x="452.70" y="534.60" width="4.2" height="12.07" fill="#1f6b36"/><rect x="452.70" y="528.96" width="4.2" height="5.03" fill="#5f9b3e"/><rect x="452.70" y="516.29" width="4.2" height="12.07" fill="#a9db6d"/><rect x="452.70" y="509.96" width="4.2" height="5.74" fill="#8c1f47"/><rect x="452.70" y="503.62" width="4.2" height="5.74" fill="#e03270"/><rect x="452.70" y="497.99" width="4.2" height="5.03" fill="#f2a48c"/><rect x="452.70" y="490.95" width="4.2" height="6.44" fill="#f4c350"/><rect x="452.70" y="484.61" width="4.2" height="5.74" fill="#7556d8"/><rect x="452.70" y="481.09" width="4.2" height="2.92" fill="#c7bff0"/><rect x="465.56" y="564.16" width="4.2" height="5.74" fill="#4c93e0"/><rect x="465.56" y="560.64" width="4.2" height="2.92" fill="#9bdcf0"/><rect x="465.56" y="555.72" width="4.2" height="4.33" fill="#5f9b3e"/><rect x="465.56" y="549.38" width="4.2" height="5.74" fill="#8c1f47"/><rect x="465.56" y="543.04" width="4.2" height="5.74" fill="#f2a48c"/><rect x="465.56" y="536.00" width="4.2" height="6.44" fill="#f4c350"/><rect x="465.56" y="530.37" width="4.2" height="5.03" fill="#7556d8"/><rect x="465.56" y="526.85" width="4.2" height="2.92" fill="#c7bff0"/><rect x="478.42" y="564.16" width="4.2" height="5.74" fill="#4c93e0"/><rect x="478.42" y="560.64" width="4.2" height="2.92" fill="#9bdcf0"/><rect x="478.42" y="555.72" width="4.2" height="4.33" fill="#5f9b3e"/><rect x="478.42" y="542.34" width="4.2" height="12.78" fill="#a9db6d"/><rect x="478.42" y="536.71" width="4.2" height="5.03" fill="#8c1f47"/><rect x="478.42" y="531.78" width="4.2" height="4.33" fill="#f2a48c"/><rect x="478.42" y="524.04" width="4.2" height="7.14" fill="#f4c350"/><rect x="478.42" y="520.52" width="4.2" height="2.92" fill="#c7bff0"/><rect x="491.28" y="563.46" width="4.2" height="6.44" fill="#4c93e0"/><rect x="491.28" y="559.94" width="4.2" height="2.92" fill="#9bdcf0"/><rect x="491.28" y="555.01" width="4.2" height="4.33" fill="#8c1f47"/><rect x="491.28" y="540.23" width="4.2" height="14.18" fill="#e03270"/><rect x="491.28" y="538.82" width="4.2" height="0.81" fill="#f2a48c"/><rect x="491.28" y="531.78" width="4.2" height="6.44" fill="#f4c350"/><rect x="491.28" y="530.37" width="4.2" height="0.81" fill="#f2a48c"/><rect x="491.28" y="528.26" width="4.2" height="1.51" fill="#c7bff0"/><rect x="504.14" y="563.46" width="4.2" height="6.44" fill="#4c93e0"/><rect x="504.14" y="559.94" width="4.2" height="2.92" fill="#5f9b3e"/><rect x="504.14" y="555.01" width="4.2" height="4.33" fill="#8c1f47"/><rect x="504.14" y="549.38" width="4.2" height="5.03" fill="#f2a48c"/><rect x="504.14" y="541.64" width="4.2" height="7.14" fill="#f4c350"/><rect x="504.14" y="536.00" width="4.2" height="5.03" fill="#7556d8"/><rect x="504.14" y="532.48" width="4.2" height="2.92" fill="#c7bff0"/><rect x="517.00" y="565.57" width="4.2" height="4.33" fill="#5f9b3e"/><rect x="517.00" y="559.94" width="4.2" height="5.03" fill="#8c1f47"/><rect x="517.00" y="545.86" width="4.2" height="13.48" fill="#e03270"/><rect x="517.00" y="540.23" width="4.2" height="5.03" fill="#f2a48c"/><rect x="517.00" y="532.48" width="4.2" height="7.14" fill="#f4c350"/><rect x="517.00" y="528.96" width="4.2" height="2.92" fill="#c7bff0"/><rect x="529.86" y="566.28" width="4.2" height="3.62" fill="#9bdcf0"/><rect x="529.86" y="553.60" width="4.2" height="12.07" fill="#1f6b36"/><rect x="529.86" y="548.68" width="4.2" height="4.33" fill="#5f9b3e"/><rect x="529.86" y="536.00" width="4.2" height="12.07" fill="#a9db6d"/><rect x="529.86" y="530.37" width="4.2" height="5.03" fill="#f2a48c"/><rect x="529.86" y="524.74" width="4.2" height="5.03" fill="#7556d8"/><rect x="529.86" y="521.22" width="4.2" height="2.92" fill="#c7bff0"/><rect x="542.72" y="563.46" width="4.2" height="6.44" fill="#4c93e0"/><rect x="542.72" y="559.94" width="4.2" height="2.92" fill="#9bdcf0"/><rect x="542.72" y="554.31" width="4.2" height="5.03" fill="#8c1f47"/><rect x="542.72" y="540.23" width="4.2" height="13.48" fill="#e03270"/><rect x="542.72" y="534.60" width="4.2" height="5.03" fill="#f2a48c"/><rect x="542.72" y="527.56" width="4.2" height="6.44" fill="#f4c350"/><rect x="542.72" y="521.22" width="4.2" height="5.74" fill="#7556d8"/><rect x="555.58" y="565.57" width="4.2" height="4.33" fill="#9bdcf0"/><rect x="555.58" y="553.60" width="4.2" height="11.37" fill="#1f6b36"/><rect x="555.58" y="548.68" width="4.2" height="4.33" fill="#5f9b3e"/><rect x="555.58" y="543.04" width="4.2" height="5.03" fill="#8c1f47"/><rect x="555.58" y="538.82" width="4.2" height="3.62" fill="#f2a48c"/><rect x="555.58" y="530.37" width="4.2" height="7.85" fill="#f4c350"/><rect x="555.58" y="527.56" width="4.2" height="2.22" fill="#c7bff0"/><rect x="568.44" y="566.98" width="4.2" height="2.92" fill="#9bdcf0"/><rect x="568.44" y="562.05" width="4.2" height="4.33" fill="#8c1f47"/><rect x="568.44" y="547.97" width="4.2" height="13.48" fill="#e03270"/><rect x="568.44" y="541.64" width="4.2" height="5.74" fill="#f2a48c"/><rect x="568.44" y="534.60" width="4.2" height="6.44" fill="#f4c350"/><rect x="568.44" y="529.67" width="4.2" height="4.33" fill="#7556d8"/><rect x="568.44" y="526.15" width="4.2" height="2.92" fill="#c7bff0"/><rect x="581.30" y="564.16" width="4.2" height="5.74" fill="#5e5e58"/><rect x="581.30" y="557.12" width="4.2" height="6.44" fill="#4c93e0"/><rect x="581.30" y="553.60" width="4.2" height="2.92" fill="#9bdcf0"/><rect x="581.30" y="548.68" width="4.2" height="4.33" fill="#5f9b3e"/><rect x="581.30" y="533.89" width="4.2" height="14.18" fill="#e03270"/><rect x="581.30" y="526.85" width="4.2" height="6.44" fill="#7556d8"/><rect x="581.30" y="523.33" width="4.2" height="2.92" fill="#c7bff0"/><rect x="594.16" y="565.57" width="4.2" height="4.33" fill="#9bdcf0"/><rect x="594.16" y="561.35" width="4.2" height="3.62" fill="#f2a48c"/><rect x="594.16" y="556.42" width="4.2" height="4.33" fill="#7556d8"/><rect x="594.16" y="552.20" width="4.2" height="3.62" fill="#c7bff0"/><rect x="607.02" y="564.16" width="4.2" height="5.74" fill="#1d4486"/><rect x="607.02" y="557.12" width="4.2" height="6.44" fill="#4c93e0"/><rect x="607.02" y="553.60" width="4.2" height="2.92" fill="#9bdcf0"/><rect x="607.02" y="539.52" width="4.2" height="13.48" fill="#1f6b36"/><rect x="607.02" y="534.60" width="4.2" height="4.33" fill="#5f9b3e"/><rect x="607.02" y="520.52" width="4.2" height="13.48" fill="#a9db6d"/><rect x="607.02" y="515.59" width="4.2" height="4.33" fill="#8c1f47"/><rect x="607.02" y="508.55" width="4.2" height="6.44" fill="#e03270"/><rect x="607.02" y="503.62" width="4.2" height="4.33" fill="#f2a48c"/><rect x="607.02" y="495.88" width="4.2" height="7.14" fill="#f4c350"/><rect x="607.02" y="490.95" width="4.2" height="4.33" fill="#7556d8"/><rect x="607.02" y="487.43" width="4.2" height="2.92" fill="#c7bff0"/><rect x="619.88" y="564.16" width="4.2" height="5.74" fill="#4c93e0"/><rect x="619.88" y="560.64" width="4.2" height="2.92" fill="#9bdcf0"/><rect x="619.88" y="555.72" width="4.2" height="4.33" fill="#5f9b3e"/><rect x="619.88" y="550.08" width="4.2" height="5.03" fill="#8c1f47"/><rect x="619.88" y="544.45" width="4.2" height="5.03" fill="#f2a48c"/><rect x="619.88" y="537.41" width="4.2" height="6.44" fill="#f4c350"/><rect x="619.88" y="532.48" width="4.2" height="4.33" fill="#7556d8"/><rect x="619.88" y="528.96" width="4.2" height="2.92" fill="#c7bff0"/><rect x="632.74" y="564.16" width="4.2" height="5.74" fill="#4c93e0"/><rect x="632.74" y="559.94" width="4.2" height="3.62" fill="#9bdcf0"/><rect x="632.74" y="555.01" width="4.2" height="4.33" fill="#5f9b3e"/><rect x="632.74" y="542.34" width="4.2" height="12.07" fill="#a9db6d"/><rect x="632.74" y="537.41" width="4.2" height="4.33" fill="#8c1f47"/><rect x="632.74" y="532.48" width="4.2" height="4.33" fill="#f2a48c"/><rect x="632.74" y="525.44" width="4.2" height="6.44" fill="#f4c350"/><rect x="632.74" y="521.92" width="4.2" height="2.92" fill="#c7bff0"/><rect x="645.60" y="564.16" width="4.2" height="5.74" fill="#4c93e0"/><rect x="645.60" y="560.64" width="4.2" height="2.92" fill="#9bdcf0"/><rect x="645.60" y="555.01" width="4.2" height="5.03" fill="#8c1f47"/><rect x="645.60" y="540.93" width="4.2" height="13.48" fill="#e03270"/><rect x="645.60" y="536.71" width="4.2" height="3.62" fill="#f2a48c"/><rect x="645.60" y="531.78" width="4.2" height="4.33" fill="#f4c350"/><rect x="645.60" y="528.26" width="4.2" height="2.92" fill="#c7bff0"/><rect x="658.46" y="564.16" width="4.2" height="5.74" fill="#4c93e0"/><rect x="658.46" y="559.24" width="4.2" height="4.33" fill="#5f9b3e"/><rect x="658.46" y="554.31" width="4.2" height="4.33" fill="#8c1f47"/><rect x="658.46" y="547.97" width="4.2" height="5.74" fill="#f2a48c"/><rect x="658.46" y="540.93" width="4.2" height="6.44" fill="#f4c350"/><rect x="658.46" y="534.60" width="4.2" height="5.74" fill="#7556d8"/><rect x="658.46" y="531.08" width="4.2" height="2.92" fill="#c7bff0"/><rect x="671.32" y="565.57" width="4.2" height="4.33" fill="#5f9b3e"/><rect x="671.32" y="559.24" width="4.2" height="5.74" fill="#8c1f47"/><rect x="671.32" y="545.86" width="4.2" height="12.78" fill="#e03270"/><rect x="671.32" y="540.93" width="4.2" height="4.33" fill="#f2a48c"/><rect x="671.32" y="533.19" width="4.2" height="7.14" fill="#f4c350"/><rect x="671.32" y="528.96" width="4.2" height="3.62" fill="#c7bff0"/><rect x="684.18" y="566.98" width="4.2" height="2.92" fill="#9bdcf0"/><rect x="684.18" y="553.60" width="4.2" height="12.78" fill="#1f6b36"/><rect x="684.18" y="549.38" width="4.2" height="3.62" fill="#5f9b3e"/><rect x="684.18" y="535.30" width="4.2" height="13.48" fill="#a9db6d"/><rect x="684.18" y="530.37" width="4.2" height="4.33" fill="#f2a48c"/><rect x="684.18" y="525.44" width="4.2" height="4.33" fill="#7556d8"/><rect x="684.18" y="521.92" width="4.2" height="2.92" fill="#c7bff0"/><rect x="697.04" y="564.16" width="4.2" height="5.74" fill="#4c93e0"/><rect x="697.04" y="560.64" width="4.2" height="2.92" fill="#9bdcf0"/><rect x="697.04" y="554.31" width="4.2" height="5.74" fill="#8c1f47"/><rect x="697.04" y="539.52" width="4.2" height="14.18" fill="#e03270"/><rect x="697.04" y="534.60" width="4.2" height="4.33" fill="#f2a48c"/><rect x="697.04" y="527.56" width="4.2" height="6.44" fill="#f4c350"/><rect x="697.04" y="522.63" width="4.2" height="4.33" fill="#7556d8"/><rect x="709.90" y="566.28" width="4.2" height="3.62" fill="#9bdcf0"/><rect x="709.90" y="553.60" width="4.2" height="12.07" fill="#1f6b36"/><rect x="709.90" y="549.38" width="4.2" height="3.62" fill="#5f9b3e"/><rect x="709.90" y="543.04" width="4.2" height="5.74" fill="#8c1f47"/><rect x="709.90" y="539.52" width="4.2" height="2.92" fill="#f2a48c"/><rect x="709.90" y="531.78" width="4.2" height="7.14" fill="#f4c350"/><rect x="709.90" y="528.26" width="4.2" height="2.92" fill="#c7bff0"/><rect x="722.76" y="566.28" width="4.2" height="3.62" fill="#9bdcf0"/><rect x="722.76" y="560.64" width="4.2" height="5.03" fill="#8c1f47"/><rect x="722.76" y="546.56" width="4.2" height="13.48" fill="#e03270"/><rect x="722.76" y="541.64" width="4.2" height="4.33" fill="#f2a48c"/><rect x="722.76" y="534.60" width="4.2" height="6.44" fill="#f4c350"/><rect x="722.76" y="528.26" width="4.2" height="5.74" fill="#7556d8"/><rect x="722.76" y="525.44" width="4.2" height="2.22" fill="#c7bff0"/><rect x="735.62" y="563.46" width="4.2" height="6.44" fill="#4c93e0"/><rect x="735.62" y="559.94" width="4.2" height="2.92" fill="#9bdcf0"/><rect x="735.62" y="555.72" width="4.2" height="3.62" fill="#5f9b3e"/><rect x="735.62" y="541.64" width="4.2" height="13.48" fill="#e03270"/><rect x="735.62" y="540.23" width="4.2" height="0.81" fill="#f2a48c"/><rect x="735.62" y="534.60" width="4.2" height="5.03" fill="#7556d8"/><rect x="735.62" y="531.08" width="4.2" height="2.92" fill="#c7bff0"/><rect x="748.48" y="566.98" width="4.2" height="2.92" fill="#5e5e58"/><rect x="748.48" y="563.46" width="4.2" height="2.92" fill="#9bdcf0"/><rect x="748.48" y="558.53" width="4.2" height="4.33" fill="#f2a48c"/><rect x="748.48" y="552.20" width="4.2" height="5.74" fill="#7556d8"/><rect x="748.48" y="548.68" width="4.2" height="2.92" fill="#c7bff0"/></svg>
<div class="t" id="t114" style="right:361px;top:564.50px;font-size:6.2px;color:#b5b5b5;">0</div>
<div class="t" id="t115" style="right:361px;top:546.90px;font-size:6.2px;color:#b5b5b5;">25</div>
<div class="t" id="t116" style="right:361px;top:529.30px;font-size:6.2px;color:#b5b5b5;">50</div>
<div class="t" id="t117" style="right:361px;top:511.70px;font-size:6.2px;color:#b5b5b5;">75</div>
<div class="t" id="t118" style="right:361px;top:494.10px;font-size:6.2px;color:#b5b5b5;">100</div>
<div class="t" id="t119" style="right:361px;top:476.50px;font-size:6.2px;color:#b5b5b5;">125</div>
<div class="t" style="left:444.80px;width:20px;text-align:center;top:570.00px;font-size:6.4px;color:#b5b5b5">12</div>
<div class="t" style="left:471.72px;width:20px;text-align:center;top:570.00px;font-size:6.4px;color:#b5b5b5">14</div>
<div class="t" style="left:498.64px;width:20px;text-align:center;top:570.00px;font-size:6.4px;color:#b5b5b5">16</div>
<div class="t" style="left:525.56px;width:20px;text-align:center;top:570.00px;font-size:6.4px;color:#b5b5b5">18</div>
<div class="t" style="left:552.48px;width:20px;text-align:center;top:570.00px;font-size:6.4px;color:#b5b5b5">20</div>
<div class="t" style="left:579.40px;width:20px;text-align:center;top:570.00px;font-size:6.4px;color:#b5b5b5">22</div>
<div class="t" style="left:606.32px;width:20px;text-align:center;top:570.00px;font-size:6.4px;color:#b5b5b5">00</div>
<div class="t" style="left:633.24px;width:20px;text-align:center;top:570.00px;font-size:6.4px;color:#b5b5b5">02</div>
<div class="t" style="left:660.16px;width:20px;text-align:center;top:570.00px;font-size:6.4px;color:#b5b5b5">04</div>
<div class="t" style="left:687.08px;width:20px;text-align:center;top:570.00px;font-size:6.4px;color:#b5b5b5">06</div>
<div class="t" style="left:714.00px;width:20px;text-align:center;top:570.00px;font-size:6.4px;color:#b5b5b5">08</div>
<div class="t" style="left:740.92px;width:20px;text-align:center;top:570.00px;font-size:6.4px;color:#b5b5b5">10</div>
</body></html>
